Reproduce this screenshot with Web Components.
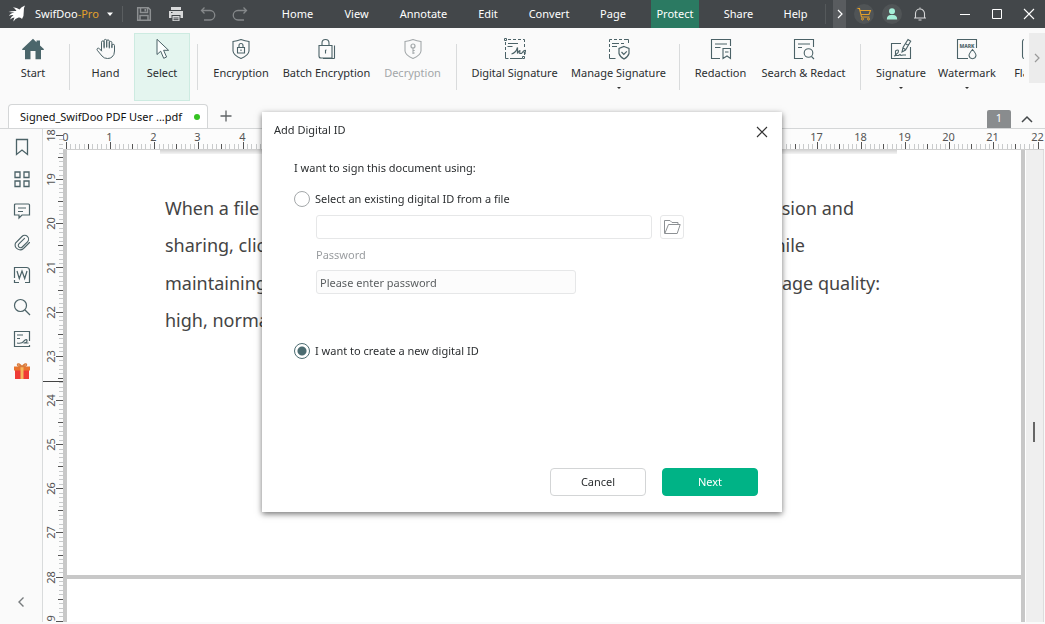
<!DOCTYPE html>
<html lang="en">
<head>
<meta charset="utf-8">
<title>SwifDoo PDF</title>
<style>
html, body { margin: 0; height: 100%; }
body { font: 11px/16px "Noto Sans", "Open Sans", sans-serif; color: #2b2e30; background: #fafafa; overflow: hidden; }
</style>
</head>
<body>
<sd-app></sd-app>
<script>
const ICONS = {
  bird: [20, '<path fill="#fff" d="M5 3.200Q9 3.500 11.500 5.500 13 3 17 1.500q-1.500 2.500-1.200 5.500.3 5-1.800 8-1-2-3.500-1.500Q7 14.500 5.500 17.500q0-2 1-4-2 0-4.500 2 1-3 3.500-4.500-2.500-.5-4.500 1Q2 9 6.500 8.500L.5 8Q4 6.700 8.500 7 7 4.500 5 3.200z"/>'],
  save: [16, '<path fill="none" stroke="#8d9092" stroke-width="1.500" d="M1.700 1.700h10.600l2 2v10.600H1.700zM4.500 2v4.500h7V2M4 14V9.500h8V14"/><path fill="#8d9092" d="M8.500 3h1.500v2.500H8.500z"/>'],
  print: [16, '<path fill="#d8d9da" d="M3 1h10v3H3zM1 5h14v7h-2.500V9h-9v3H1zM4.500 10h7v5h-7z"/><path stroke="#43474a" d="M5.500 12h5M5.500 13.700h5M3 6.500h1.500"/>'],
  undo: [16, '<path fill="none" stroke="#85888a" stroke-width="1.300" d="M4.500 1.500l-3 3 3 3M1.800 4.500H10a4.700 4.700 0 010 9.500H4"/>'],
  redo: [16, '<path fill="none" stroke="#85888a" stroke-width="1.300" d="M11.500 1.500l3 3-3 3M14.200 4.500H6A4.700 4.700 0 006 14h6"/>'],
  caret: [8, '<path fill="currentColor" d="M1 2.500h6L4 6z"/>'],
  more: [10, '<path fill="none" stroke="currentColor" stroke-width="1.200" d="M3 1l4 4-4 4"/>'],
  cart: [16, '<path fill="none" stroke="#e2a02a" stroke-width="1.100" d="M1.500 2.500h2l2 8.500h8M4 4.500h10.500l-1.500 4H5"/><circle cx="6.500" cy="13" r="1" fill="none" stroke="#e2a02a"/><circle cx="12.500" cy="13" r="1" fill="none" stroke="#e2a02a"/>'],
  user: [16, '<circle cx="8" cy="5.200" r="3" fill="#a5efd8"/><path fill="#a5efd8" d="M2.800 13.500q0-4.500 4-4.500h2.400q4 0 4 4.500z"/>'],
  bell: [16, '<path fill="none" stroke="#d5d6d7" stroke-width="1.100" d="M2 12h12M3.500 12V7.500a4.500 4.500 0 019 0V12M8 3V1.500M6.500 14h3"/>'],
  min: [12, '<path stroke="#fff" stroke-width="1" d="M1 6.500h10"/>'],
  max: [12, '<path fill="none" stroke="#fff" d="M1.500 1.500h9v9h-9z"/>'],
  close: [12, '<path stroke="currentColor" stroke-width="1.100" d="M1 1l10 10M11 1L1 11"/>'],
  home: [22, '<path fill="#4b666b" d="M11 .8l3.500 3.400V2.500H18v5L21.800 11v1H19v9.200h-5.500V13h-5v8.200H3V12H.2v-1z"/>'],
  hand: [22, '<path fill="none" stroke="#4b6267" stroke-width="1" stroke-linejoin="round" stroke-linecap="round" d="M6.500 12.500V4.200a1.300 1.300 0 012.600 0V10M9.100 9V2.700a1.300 1.300 0 012.600 0V9M11.700 9V3.200a1.300 1.300 0 012.600 0V10M14.300 9V4.700a1.300 1.300 0 012.600 0v5M16.900 9V7.600a1.300 1.300 0 012.600 0V13q0 4-2.500 6-1.500 1.500-4.500 1.500-3.500 0-5.500-2.500L2.300 12.300q-.8-1.300.3-2 1-.5 2 .5l1.900 2.200"/>'],
  select: [22, '<path fill="#fcfffe" stroke="#4b6267" stroke-width="1" d="M6 1.300v15.200l3.700-3.300 3 7.100 2.900-1.300-3-6.700h5z"/>'],
  encrypt: [22, '<path fill="none" stroke="#4b6267" stroke-width="1.100" d="M11 1.500Q15 3 19 3.500v9.500Q18.500 17.500 11 20.500 3.500 17.500 3 13V3.500Q7 3 11 1.500zM7.500 9.500h7v5.500h-7zM9 9.500V7.500a2 2 0 014 0v2M11 11.500V13"/>'],
  batch: [22, '<path fill="none" stroke="#4b6267" stroke-width="1.100" d="M3 7.500h13V20H5q-2 0-2-2zM6 7.500V5a3.500 3.500 0 017 0v2.500M18.500 7.500v13M7 20.500h11.500M9.500 12v3.500M9.500 12h1"/>'],
  decrypt: [22, '<path fill="none" stroke="#a3a8aa" stroke-width="1.100" d="M11 1.500Q15 3 19 3.500v9.500Q18.500 17.500 11 20.500 3.500 17.500 3 13V3.500Q7 3 11 1.500zM11 10v6M11 12.500h1.700M11 15h1.700"/><circle cx="11" cy="8" r="2" fill="none" stroke="#a3a8aa" stroke-width="1.200"/>'],
  digital: [22, '<path fill="none" stroke="#4b6267" stroke-width="1" d="M.5 2.500h2v-2h-2zM4 1.500h3M9 1.500h3M14 1.500h3M19 1.500h1.500V4M1.500 4v3M1.500 9v3M1.500 14v6.500h3M6 20.500h12M20.500 6v3M4 5.500h10M3.500 8.500h5M18.500 18.500h2v2h-2zM20.500 14v3"/><path fill="none" stroke="#4b6267" stroke-width="1.200" d="M7.500 16q4.500-1 6-6.500v6q1.500-3 2.300-3v3h1.700q2.500-3.500 4-3t-1.200 2.200l1.200 1.300"/>'],
  manage: [22, '<path fill="none" stroke="#4b6267" stroke-width="1" d="M1.500 4V1.500H4M6 1.500h3M11 1.500h3M16 1.500h4.500V5M1.500 6v3M1.500 11v3M1.500 16v4.500h6M4 5.500h7M13 5.500h3M4 8.500h5"/><path fill="none" stroke="#4b6267" stroke-width="1.200" d="M16 8.500l5 2v5q-1 3.500-5 5.500-4-2-5-5.500v-5zM13.500 14l2.300 2.300 3-3"/>'],
  redaction: [22, '<path fill="none" stroke="#4b6267" stroke-width="1.100" d="M20.500 8V1.500h-19v19H10M5 6h12M5 9.500h5.500M13 10.500h7.500v10L17 18l-4 2.500zM15 14h3.500"/>'],
  search: [22, '<path fill="none" stroke="#4b6267" stroke-width="1.100" d="M20.500 9V1.500h-19v19H10M5 6h12M5 9.500h4M18.500 18.500l2.500 2.500"/><circle cx="15.500" cy="15" r="4.300" fill="none" stroke="#4b6267" stroke-width="1.100"/>'],
  sign: [22, '<path fill="none" stroke="#4b6267" stroke-width="1.100" d="M11 5.500H1.500v15h19V9M12 14l1-4.500L18 1.500l2.700 1.700L15.500 12zM13 10l2.500 1.500M16 6l2.500 1.500M4 18l1.500-.5V13q2.500-2 3 0 0 2-2 3l-1 1.500h3l1.500-1 1 1 2-.5h3"/>'],
  watermark: [22, '<path fill="none" stroke="#4b6267" stroke-width="1.100" d="M20.500 10V1.500h-19v19H12M16.500 11.500q-3.500 4-3.500 6 .5 3 3.500 3.200 3-.2 3.500-3.200 0-2-3.500-6z"/><text x="11" y="9.500" text-anchor="middle" font-size="5" font-weight="800" fill="#4b6267">MARK</text>'],
  flatten: [22, '<path fill="none" stroke="#4b6267" stroke-width="1.100" d="M8 1.500H3.500q-2 0-2 2v15q0 2 2 2H8M14 1.500h6.500v19H14M5 11h12"/>'],
  plus: [14, '<path stroke="#5f6365" stroke-width="1.300" d="M1.500 7h11M7 1.500v11"/>'],
  up: [12, '<path fill="none" stroke="#44484a" stroke-width="1.500" d="M1 9l5-5 5 5"/>'],
  left: [12, '<path fill="none" stroke="#777b7d" stroke-width="1.400" d="M8.500 1.500L4 6l4.500 4.500"/>'],
  bookmark: [18, '<path fill="none" stroke="#4b6267" stroke-width="1.300" d="M3.500 1.500h11v15L9 12l-5.500 4.500z"/>'],
  grid: [18, '<path fill="none" stroke="#4b6267" stroke-width="1.300" d="M2 2h5v5.500H2zM11 2h5v5.500h-5zM2 11h5v5.500H2zM11 11h5v5.500h-5z"/>'],
  comment: [18, '<path fill="none" stroke="#4b6267" stroke-width="1.200" d="M2.500 2h13q1 0 1 1v10H9l-3 3v-3H1.500V3q0-1 1-1zM5 6h8M5 9.500h5"/>'],
  clip: [18, '<path fill="none" stroke="#4b6267" stroke-width="1.100" stroke-linecap="round" d="M16.500 8.500L10.500 14.500a5 5 0 01-8-5.500L9 2.500a3.800 3.800 0 015.500 5.300L9.300 13a2.300 2.300 0 01-3.400-3.200L11.500 4.300"/>'],
  word: [18, '<path fill="none" stroke="#4b6267" stroke-width="1.200" d="M1.500 12V1.500h12q3 0 3 3v12H12M1.500 14v2.500H6M4 5l2.300 7.500L9 5l2.700 7.500L14 5"/>'],
  find: [18, '<circle cx="7.500" cy="7.500" r="6" fill="none" stroke="#4b6267" stroke-width="1.200"/><path stroke="#4b6267" stroke-width="1.300" d="M12 12l5 5"/>'],
  sigpanel: [18, '<path fill="none" stroke="#4b6267" stroke-width="1.200" d="M16.500 11V1.500h-15v15h15V15M4 5h6M4 8.500h3M4 13q5 1 7-2 2.500-2.500 3-.5t-3.500 2.500h5"/>'],
  gift: [18, '<path fill="#ef3b36" d="M2 8h14v9H2z"/><path fill="#e8742e" d="M1 4.500h16V8.500H1z"/><path fill="#f5b65c" d="M7.500 4.500h3V17h-3z"/><path fill="none" stroke="#d97b3c" stroke-width="1.400" d="M9 4.500Q4 4.500 4.500 2.500T9 4.500Q14 4.500 13.500 2.500T9 4.500"/>'],
  folder: [18, '<path fill="none" stroke="#8d9194" stroke-width="1" d="M1.500 15.500v-13h5.500l2 2h6v2M1.800 15.500L5.500 6.500h11.700l-3 9z"/>']
};

function define(name, css, html, setup) {
  const template = document.createElement('template');
  template.innerHTML = `<style>*{box-sizing:border-box}button{font:inherit;color:inherit;border:0;background:none;padding:0;margin:0}${css}</style>${html}`;
  customElements.define(name, class extends HTMLElement {
    connectedCallback() {
      if (this.shadowRoot) return;
      const root = this.attachShadow({ mode: 'open' });
      root.append(template.content.cloneNode(true));
      if (setup) setup(root, this);
    }
  });
}

define('sd-icon', ':host{display:block;flex:none}svg{display:block}', '', (root, el) => {
  const [size, body] = ICONS[el.getAttribute('name')];
  const px = el.getAttribute('size') || size;
  root.innerHTML += `<svg width="${px}" height="${px}" viewBox="0 0 ${size} ${size}" aria-hidden="true">${body}</svg>`;
});

define('sd-titlebar', `
:host{display:flex;align-items:center;height:28px;background:#43474a;color:#fff;flex:none}
.brand{display:flex;align-items:center;gap:7px;width:123px;padding-left:8px;border-right:1px solid #5a5e60;height:16px;white-space:nowrap}
.brand b{font-weight:400;color:#e2a02a}
.quick{display:flex;gap:16px;padding-left:13px;width:153px}
nav{display:flex;gap:20px;height:28px}
nav button{height:28px;width:var(--w)}
nav .on{background:#2b7a62}
.sys{display:flex;align-items:center;flex:1;height:28px}
.more{display:grid;place-items:center;width:13px;height:28px;background:#595c5f}
.bar{width:1px;height:20px;background:#55595b;margin-left:12px;margin-right:7px}
.round{display:grid;place-items:center;width:20px;height:20px;border-radius:10px;background:#505456}
.acts{display:flex;gap:8px;margin-left:8px}.acts .plain{background:none}
.win{display:flex;gap:20px;margin-left:auto;padding-right:10px}`, `
<div class="brand"><sd-icon name="bird"></sd-icon><span>SwifDoo<b>-Pro</b></span><sd-icon name="caret"></sd-icon></div>
<div class="quick"><button aria-label="Save"><sd-icon name="save"></sd-icon></button><button aria-label="Print"><sd-icon name="print"></sd-icon></button><button aria-label="Undo"><sd-icon name="undo"></sd-icon></button><button aria-label="Redo"><sd-icon name="redo"></sd-icon></button></div>
<nav><button style="--w:43px">Home</button><button style="--w:35px">View</button><button style="--w:59px">Annotate</button><button style="--w:30px">Edit</button><button style="--w:52px">Convert</button><button style="--w:36px">Page</button><button class="on" style="--w:48px">Protect</button><button style="--w:39px">Share</button><button style="--w:35px">Help</button></nav>
<div class="sys"><span class="bar"></span><button class="more" aria-label="More menus"><sd-icon name="more"></sd-icon></button>
<div class="acts"><button class="round" aria-label="Shop"><sd-icon name="cart"></sd-icon></button><button class="round" aria-label="Account"><sd-icon name="user"></sd-icon></button><button class="round plain" aria-label="Notifications"><sd-icon name="bell"></sd-icon></button></div>
<div class="win"><button aria-label="Minimize"><sd-icon name="min"></sd-icon></button><button aria-label="Maximize"><sd-icon name="max"></sd-icon></button><button aria-label="Close"><sd-icon name="close"></sd-icon></button></div></div>`);

define('sd-tool', `
:host{display:block;flex:none;height:68px}
button{display:flex;flex-direction:column;align-items:center;width:100%;height:68px;padding-top:4px;border:1px solid transparent;white-space:nowrap}
:host([active]) button{background:#e4f5ef;border-color:#cdebe1}
:host([off]) button{color:#a3a7a9}
.label{margin-top:5px}
.drop{display:none;width:0;margin-top:6px;border:2px solid transparent;border-top-color:#333;border-bottom:0}
:host([menu]) .drop{display:block}`,
`<button><span class="label"><slot></slot></span><span class="drop"></span></button>`,
(root, el) => {
  const icon = document.createElement('sd-icon');
  icon.setAttribute('name', el.getAttribute('icon'));
  root.querySelector('button').prepend(icon);
  el.style.width = el.getAttribute('w') + 'px';
});

define('sd-ribbon', `
:host{display:flex;height:75px;padding-top:5px;flex:none}
.strip{display:flex;flex:1;min-width:0;overflow:hidden;padding-left:4px;margin-right:5px}
i{flex:none;width:1px;height:46px;margin:11px 7px 0;background:#d9dbdc}
.next{display:grid;place-items:center;width:16px;height:50px;background:#ececec;color:#999}`, `
<div class="strip"><sd-tool icon="home" w="58">Start</sd-tool><i></i><sd-tool icon="hand" w="57">Hand</sd-tool><sd-tool icon="select" w="56" active>Select</sd-tool><i></i>
<sd-tool icon="encrypt" w="72">Encryption</sd-tool><sd-tool icon="batch" w="99">Batch Encryption</sd-tool><sd-tool icon="decrypt" w="73" off>Decryption</sd-tool><i></i>
<sd-tool icon="digital" w="101">Digital Signature</sd-tool><sd-tool icon="manage" w="107" menu>Manage Signature</sd-tool><i></i>
<sd-tool icon="redaction" w="67">Redaction</sd-tool><sd-tool icon="search" w="99">Search &amp; Redact</sd-tool><i></i>
<sd-tool icon="sign" w="66" menu>Signature</sd-tool><sd-tool icon="watermark" w="66" menu>Watermark</sd-tool><sd-tool icon="flatten" w="64">Flatten</sd-tool></div>
<button class="next" aria-label="More tools"><sd-icon name="more"></sd-icon></button>`);

define('sd-tabs', `
:host{display:flex;align-items:flex-end;height:26px;flex:none;border-bottom:1px solid #d4d6d7;padding-left:8px}
.tab{display:flex;align-items:center;justify-content:space-between;width:200px;height:24px;padding:0 7px 0 11px;border:1px solid #d4d6d7;border-bottom:0;border-radius:4px 4px 0 0;background:#fff;color:#111;white-space:nowrap}
.dot{width:6px;height:6px;border-radius:3px;background:#35c322}
.add{margin:0 auto 5px 11px}
.num{width:24px;height:18px;background:#898c8e;color:#fff;text-align:center;border-radius:2px 2px 0 0}
.up{margin:0 12px 3px 10px}`, `
<div class="tab" role="tab"><span>Signed_SwifDoo PDF User ...pdf</span><span class="dot"></span></div>
<button class="add" aria-label="New tab"><sd-icon name="plus"></sd-icon></button><span class="num">1</span><button class="up" aria-label="Collapse ribbon"><sd-icon name="up"></sd-icon></button>`);

define('sd-sidebar', `
:host{display:flex;flex-direction:column;align-items:center;gap:14px;width:42px;padding:9px 0 16px 1px;flex:none}
button:last-child{margin-top:auto;margin-right:2px}`,
['bookmark', 'grid', 'comment', 'clip', 'word', 'find', 'sigpanel', 'gift', 'left'].map(n => `<button aria-label="${n}"><sd-icon name="${n}"></sd-icon></button>`).join(''));

// Centimetre ruler: the value 'from' stands at 'origin' px; numbers covered by the dialog ('skip') are left out.
define('sd-ruler', `
:host{display:block;overflow:hidden;background:#fcfcfc;flex:none}
:host([axis=x]){height:21px;border-bottom:1px solid #d0d0d0}
:host([axis=y]){width:21px;border-left:1px solid #d9dbdc}
svg{display:block;overflow:visible}text{font-size:11px;fill:#555}`,
'<svg width="20" height="20"></svg>', (root, el) => {
  const x = el.getAttribute('axis') === 'x', from = +el.getAttribute('from'), to = +el.getAttribute('to');
  const origin = +el.getAttribute('origin'), unit = 44.16;
  const [lo, hi] = (el.getAttribute('skip') || '-2 -1').split(' ').map(Number);
  let out = '';
  for (let n = 0; n <= (to - from) * 10; n++) {
    const p = Math.round(origin + n * unit / 10) + 0.5, major = n % 10 === 0, half = n % 5 === 0;
    const c = half ? '#555' : '#c8cacb', len = major ? 7 : half ? 5 : x ? 5 : 4;
    out += `<path stroke="${c}" d="${x ? `M${p} 20v-${len}` : `M20 ${p}h-${len}`}"/>`;
    const v = from + n / 10;
    if (major && !(v >= lo && v <= hi)) {
      out += x ? `<text x="${p - 1}" y="12" text-anchor="middle">${v}</text>`
               : `<text transform="translate(12 ${p}) rotate(-90)" text-anchor="middle">${v}</text>`;
    }
  }
  if (!x) out += '<path stroke="#444" d="M0 252.500h21"/>';
  root.querySelector('svg').innerHTML = out;
});

define('sd-document', `
:host{display:flex;flex-direction:column;flex:1;min-width:0}
.view{display:flex;flex:1;min-height:0;background:#c8c8c8;padding-left:4px}
.pages{flex:1;display:flex;flex-direction:column;gap:4px;min-width:0;overflow:hidden}
.page{background:#fff;height:425px;flex:none}.page:last-child{flex:1;height:auto}
.edge{height:4px;margin:0 124px 0 93px;background:linear-gradient(#d4d4d4,#f4f4f4)}
.text{padding:36px 0 0 98px;font-size:18px;line-height:37px;color:#444}
.line{display:flex;justify-content:space-between;white-space:nowrap;height:37px;padding-right:var(--r)}
.line:nth-child(2){height:38px}
.scroll{display:flex;flex-direction:column;align-items:center;width:19px;margin-left:4px;background:#efefef;border-left:1px solid #fff;border-right:1px solid #ddd}
.scroll span{width:2px;height:20px;margin:272px 2px 0 0;background:#666}`, `
<sd-ruler axis="x" from="0" to="22" origin="3" skip="5 16"></sd-ruler>
<div class="view"><div class="pages"><article class="page"><div class="edge"></div><div class="text">
<div class="line" style="--r:167px"><span>When a file</span><span>ssion and</span></div>
<div class="line" style="--r:216px"><span>sharing, click</span><span>while</span></div>
<div class="line" style="--r:141px"><span>maintaining</span><span>image quality:</span></div>
<div class="line" style="--r:0px"><span>high, normal,</span></div>
</div></article><div class="page"></div></div><div class="scroll"><span></span></div></div>`);

define('sd-dialog', `
:host{position:fixed;inset:0;display:grid;place-items:center;padding-right:1px}
form{display:flex;flex-direction:column;width:520px;height:400px;background:#fff;box-shadow:0 2px 6px rgba(0,0,0,.55);padding:10px 24px 16px 12px}
header{display:flex;justify-content:space-between;height:38px;margin-right:-12px}
header button{width:16px;height:16px;margin-top:2px;color:#333;padding:2px}
.body{padding-left:20px;display:flex;flex-direction:column}
label.r{display:flex;align-items:center;gap:5px;height:20px;margin-top:13px}
input[type=radio]{appearance:none;width:16px;height:16px;margin:0;border:1px solid #a4a8aa;border-radius:8px;background:#fff;flex:none}
input[type=radio]:checked{border-color:#4b6b70;background:radial-gradient(circle,#4b6b70 4px,#fff 5px)}
.fields{display:flex;flex-direction:column;padding-left:22px}
.row{display:flex;gap:8px;margin-top:6px}
input[type=text],input[type=password]{font:inherit;color:#555;height:24px;border:1px solid #e6e7e8;border-radius:3px;padding:0 3px;background:#fff;outline:0}
input[type=text]{width:336px}
input[type=password]{width:260px;margin-top:7px;background:#fcfcfc}
::placeholder{color:#5b5f61;opacity:1}
.browse{display:grid;place-items:center;width:24px;height:24px;border:1px solid #e6e7e8;border-radius:3px}
.pw{color:#9a9da0;margin-top:8px}
.new{padding-top:34px}
footer{display:flex;justify-content:flex-end;gap:16px;margin-top:auto}
footer button{width:96px;height:28px;border-radius:4px;border:1px solid #d3d5d6;background:#fff}
footer .go{background:#00b386;border-color:#00b386;color:#fff}`, `
<form role="dialog" aria-label="Add Digital ID"><header><span>Add Digital ID</span><button type="button" aria-label="Close"><sd-icon name="close"></sd-icon></button></header>
<div class="body"><span>I want to sign this document using:</span>
<label class="r"><input type="radio" name="id">Select an existing digital ID from a file</label>
<div class="fields"><div class="row"><input type="text" aria-label="Digital ID file"><button type="button" class="browse" aria-label="Browse"><sd-icon name="folder"></sd-icon></button></div>
<label class="pw" for="pw">Password</label><input type="password" id="pw" placeholder="Please enter password" autocomplete="off"></div>
<div class="new"><label class="r"><input type="radio" name="id" checked>I want to create a new digital ID</label></div></div>
<footer><button type="button">Cancel</button><button type="button" class="go">Next</button></footer></form>`);

define('sd-app', `
:host{display:flex;flex-direction:column;height:100vh;background:#fafafa}
main{display:flex;flex:1;min-height:0;padding-right:1px}
.work{display:flex;flex:1;min-width:0;margin-bottom:2px}`, `
<sd-titlebar></sd-titlebar><sd-ribbon></sd-ribbon><sd-tabs></sd-tabs>
<main><sd-sidebar></sd-sidebar><div class="work"><sd-ruler axis="y" from="18" to="29" origin="6"></sd-ruler><sd-document></sd-document></div></main>
<sd-dialog></sd-dialog>`);
</script>
</body>
</html>
